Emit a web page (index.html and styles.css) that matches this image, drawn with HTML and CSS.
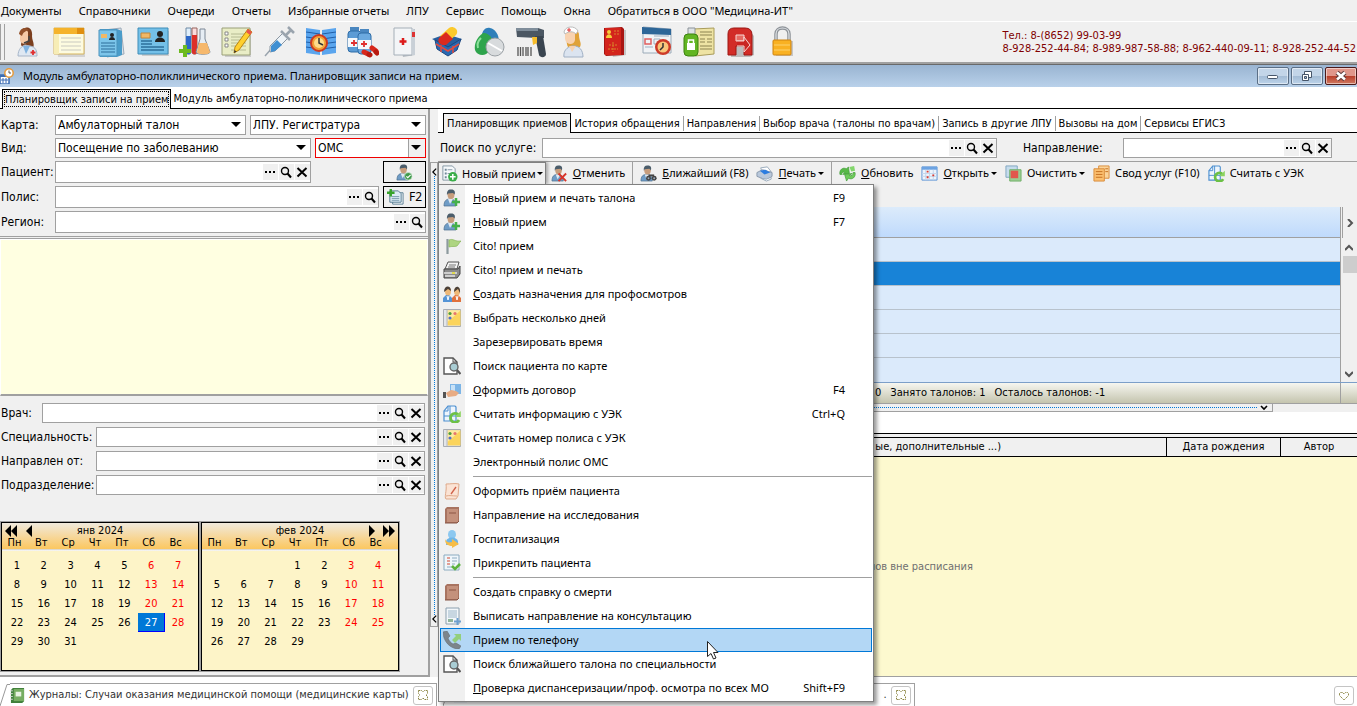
FILE: index.html
```html
<!DOCTYPE html>
<html lang="ru">
<head>
    <meta charset="UTF-8">
    <meta name="viewport" content="width=device-width, initial-scale=1.0">
    <title>Планировщик записи на прием</title>
    <link rel="stylesheet" href="styles.css">
</head>
<body>
    <!-- shared glyphs -->
    <svg class="sprite" aria-hidden="true">
        <symbol id="dots" viewBox="0 0 14 16"><path d="M2 7h2v2H2zM6 7h2v2H6zM10 7h2v2h-2z"/></symbol>
        <symbol id="search" viewBox="0 0 14 16"><circle cx="6" cy="7" r="3.500" fill="none" stroke="#000" stroke-width="1.400"/><path d="M8.500 9.500l3.500 4" stroke="#000" stroke-width="2"/></symbol>
        <symbol id="cross" viewBox="0 0 14 16"><path d="M2.500 4l9 8.500M11.500 4l-9 8.500" stroke="#000" stroke-width="2"/></symbol>
        <symbol id="person" viewBox="0 0 18 18">
            <path d="M1 17c0-5 2-7 6-7s6 2 6 7z" fill="#6f9cc6" stroke="#4a6d8c" stroke-width=".7"/>
            <path d="M5 10l2 5 3-5z" fill="#dfe9f2"/>
            <ellipse cx="8" cy="5.500" rx="3.500" ry="4.500" fill="#c79d7c"/>
            <path d="M4 6c-.5-4 1.500-6 4.500-5.500 3 0 4 2.500 3 5L10 4 5 4.500z" fill="#4b5d6b"/>
        </symbol>
        <symbol id="note" viewBox="0 0 18 18">
            <path d="M.5.5h17v17H.5z" fill="#e3e6ea" stroke="#a9adb3"/><path d="M4.500 1.500h13v15h-13z" fill="#fbd45c"/><path d="M4.500 1.500h13L4.500 13z" fill="#fdeaa0"/>
            <path d="M4 1v16" stroke="#b5b9c0"/>
            <circle cx="7" cy="4.500" r="1.600" fill="#4d9c3c"/><circle cx="12" cy="4.500" r="1.600" fill="#e8776a"/><circle cx="7" cy="9" r="1.600" fill="#5470c8"/>
        </symbol>
        <symbol id="docfind" viewBox="0 0 18 18">
            <path d="M1 1h9l4 4v12H1z" fill="#fff" stroke="#555" stroke-width="1.400"/><path d="M10 1v4h4" fill="none" stroke="#555"/>
            <circle cx="11" cy="10" r="4" fill="#a9cdd4" stroke="#666" stroke-width="1.400"/><path d="M14 13l3.500 4" stroke="#555" stroke-width="2.200"/>
        </symbol>
        <symbol id="uek" viewBox="0 0 18 18">
            <path d="M5 1h7l1 1v14H1V6z" fill="#eef5fc" stroke="#4c8fd0" stroke-width="1.200"/><path d="M5 1v5H1M7 1v15M1 11h12" fill="none" stroke="#4c8fd0"/>
            <path d="M15.500 10a4.500 4.500 0 1 0 .5 5" fill="none" stroke="#6cc046" stroke-width="2.800"/><path d="M17.800 6v6h-6z" fill="#8cd360"/>
        </symbol>
        <symbol id="book" viewBox="0 0 18 18">
            <path d="M2 3l2-2h12v14l-2 2H2z" fill="#a87360"/><path d="M4 3h11v13H4z" fill="#c4917c"/><path d="M6 6h7v2H6z" fill="#a87360"/><path d="M2 17h12l2-2" fill="none" stroke="#865444"/>
        </symbol>
        <symbol id="tab-close" viewBox="0 0 12 12"><path d="M1.500 1.500h3L6 3l1.500-1.500h3v3L9 6l1.500 1.500v3h-3L6 9l-1.500 1.500h-3v-3L3 6 1.500 4.500z" fill="#fff" stroke="#8a8440" stroke-dasharray="1.500 .7"/></symbol>
    </svg>

    <nav class="menubar">
        <a href="#">Документы</a>
        <a href="#">Справочники</a>
        <a href="#">Очереди</a>
        <a href="#">Отчеты</a>
        <a href="#">Избранные отчеты</a>
        <a href="#">ЛПУ</a>
        <a href="#">Сервис</a>
        <a href="#">Помощь</a>
        <a href="#">Окна</a>
        <a href="#">Обратиться в ООО "Медицина-ИТ"</a>
    </nav>

    <header class="toolbar">
        <div class="grip"></div>
        <div class="tools">
            <button aria-label="Оператор"><svg viewBox="0 0 32 32">
                <path d="M12 3c5-4 10 0 9 7 0 5 3 7 1 12l-9 1-3-4z" fill="#7b3f1f"/><path d="M9 9c0-5 6-7 8-3v8c-1 5-7 5-8 0z" fill="#f5c9a6"/><path d="M8 8c1-6 6-8 10-4-3 1-6 2-7 6z" fill="#93512a"/>
                <path d="M7 30c0-7 4-10 7-11l5 1c6 1 7 5 7 10z" fill="#dfe8f2" stroke="#a6b5c8"/><path d="M12 20l3 8 4-8z" fill="#7fb2e0"/><path d="M18 10v5l-5 2" fill="none" stroke="#444" stroke-width="1.500"/><path d="M22 24v5M19.500 26.500h5" stroke="#e03030" stroke-width="1.800"/>
            </svg></button>
            <button aria-label="Журнал"><svg viewBox="0 0 32 32">
                <path d="M3 5h29v26H5z" fill="#b5b5b5" opacity=".5"/><path d="M1 2h30v26H1z" fill="#fdfbe0" stroke="#d6b45c"/><path d="M1 2h30v6H1z" fill="#f5b32c"/><path d="M24 2h7v6h-7z" fill="#e08f10"/><path d="M1 8h5v20H1z" fill="#f7edb6"/>
                <path d="M8 12h20M8 16h20M8 20h20M8 24h20" stroke="#c9c9c0"/>
            </svg></button>
            <button aria-label="Карты пациентов"><svg viewBox="0 0 32 32">
                <path d="M9 4l17-2 3 26-17 3z" fill="#dce3ea" stroke="#9aa9b8"/><path d="M5 3h17l5 2v24l-5 2H5z" fill="#4a9cc9"/><path d="M4 4h18v26H4z" fill="#7cc5ea" stroke="#4b93bd"/><path d="M6 8h6v4H6z" fill="#f0b867"/><circle cx="17" cy="9" r="2" fill="#222"/><path d="M14 14c0-4 6-4 6 0z" fill="#222"/><path d="M6 17h14M6 20h14M6 23h14M6 26h14" stroke="#2c6f9a" stroke-width="1.200"/>
            </svg></button>
            <button aria-label="Карта"><svg viewBox="0 0 32 32">
                <path d="M3 5h29v25H5z" fill="#aaa" opacity=".5"/><path d="M1 2h30v26H1z" fill="#74c0e8" stroke="#3f8db8"/><path d="M4 7h9v5H4z" fill="#f0b867" stroke="#c2863a"/><circle cx="23" cy="8" r="3" fill="#222"/><path d="M18 16c0-6 10-6 10 0z" fill="#222"/><path d="M4 15h11M4 18h11M4 21h23M4 24h23" stroke="#2c6f9a" stroke-width="1.300"/>
            </svg></button>
            <button aria-label="Анализы"><svg viewBox="0 0 32 32">
                <path d="M7 2h5v24c0 3-5 3-5 0z" fill="#dfeefa" stroke="#6e8aa5"/><path d="M7 10h5v16c0 3-5 3-5 0z" fill="#2d67c8"/><path d="M13 2h5v24c0 3-5 3-5 0z" fill="#fbdcdc" stroke="#96645f"/><path d="M13 9h5v17c0 3-5 3-5 0z" fill="#dc2f28"/>
                <path d="M21 3h5v10l5 13c0 3-14 3-14 0l4-13z" fill="#e6edf4" stroke="#7c8896"/><path d="M20 17h8l3 9c0 3-13 3-13 0z" fill="#f6b86c"/><path d="M6 19v12M0 25h12" stroke="#6cba1f" stroke-width="4"/>
            </svg></button>
            <button aria-label="Запись"><svg viewBox="0 0 32 32">
                <path d="M2 3h28v28H4z" fill="#999" opacity=".4"/><path d="M1 2h28v27H1z" fill="#e9edc6" stroke="#9aa078"/><path d="M4 6h3v3H4zM4 12h3v3H4zM4 18h3v3H4z" fill="#fff" stroke="#888"/><path d="M10 8h15M10 11h15M10 14h15M10 17h15M10 20h15M10 24h15" stroke="#b5ba92"/>
                <path d="M27 3l4 3-13 18-5 3 1-6z" fill="#ffd02e" stroke="#b98512"/><path d="M27 3l4 3-2 3-4-3z" fill="#e8554a"/><path d="M13 27l.5-3 2 1.500z" fill="#333"/>
            </svg></button>
            <button aria-label="Прививки"><svg viewBox="0 0 32 32">
                <path d="M2 30l7-8" stroke="#9aa4ae" stroke-width="1.500"/><path d="M7 20L20 7l5 5-13 13-5 1z" fill="#eef3f7" stroke="#8b97a3"/><path d="M8 20l6-6 5 5-7 6-4 1z" fill="#3f8fd2"/><path d="M18 5l9 9M23 9l5-5M25 1l6 6" stroke="#9aa4ae" stroke-width="2.500"/>
            </svg></button>
            <button aria-label="Расписание"><svg viewBox="0 0 32 32">
                <path d="M1 2l14 2v25L1 27zM31 2L17 4v25l14-2z" fill="#5aa5ee"/><path d="M1 6l14 2M1 11l14 2M1 16l14 2M1 21l14 2M31 6L17 8M31 11l-14 2M31 16l-14 2M31 21l-14 2" stroke="#225fa8"/><circle cx="14" cy="17" r="8" fill="#f3a336" stroke="#cc3a22" stroke-width="2"/><circle cx="14" cy="17" r="5" fill="#ffdc8a"/><path d="M14 12v5l4 2" fill="none" stroke="#333" stroke-width="1.500"/>
            </svg></button>
            <button aria-label="Лекарства"><svg viewBox="0 0 32 32">
                <path d="M3 1h9v4H3z" fill="#4a87c0"/><rect x="1" y="5" width="13" height="21" rx="3" fill="#5b9bd5" stroke="#2f6ca6"/><path d="M1 12h13v9H1z" fill="#f4f8fb"/><path d="M7 14v6M4 17h6" stroke="#e03030" stroke-width="1.800"/>
                <path d="M13 3h9v4h-9z" fill="#4a87c0"/><rect x="11" y="7" width="13" height="21" rx="3" fill="#6ba9df" stroke="#2f6ca6"/><path d="M11 14h13v9H11z" fill="#f4f8fb"/><path d="M17 15v6M14 18h6" stroke="#e03030" stroke-width="1.800"/>
                <path d="M17 26l4 2M25 22l4 3" stroke="#d8281c" stroke-width="5" stroke-linecap="round"/><path d="M22 28.500l1 .5M29 26l1 1" stroke="#b81a10" stroke-width="5" stroke-linecap="round"/>
            </svg></button>
            <button aria-label="Медкарта"><svg viewBox="0 0 32 32">
                <path d="M9 4l17-1v26l-12 2z" fill="#8c98a4" opacity=".6"/><path d="M5 2h18v27H5z" fill="#f3f5f7" stroke="#a5afb8"/><path d="M23 2l3 2v25l-3 0z" fill="#c9d0d7"/><path d="M23 6h3v5h-3z" fill="#d33"/><path d="M14 12v7M10.500 15.500h7" stroke="#dc1c1c" stroke-width="2.500"/>
            </svg></button>
            <button aria-label="Корзина лекарств"><svg viewBox="0 0 32 32">
                <path d="M1 13l14-5 16 5-13 9z" fill="#275f9e"/><path d="M4 14l2 9 11 7 9-6 4-11-13 8z" fill="#2a69b2" stroke="#1b4680"/><path d="M9 10L18 2c4-3 11 2 7 7l-8 7z" fill="#fbc92b"/><path d="M8 12l7-6 7 7-7 6c-6 1-9-3-7-7z" fill="#db2a1e"/><path d="M5 18l12 7 11-7M10 19v7M22 20v7" fill="none" stroke="#e24a3e" stroke-width="1.500"/>
            </svg></button>
            <button aria-label="Препараты"><svg viewBox="0 0 32 32">
                <path d="M9 10C9 4 13 1 17 2c5 1 9 6 9 14l-8 4z" fill="#2f7fb9"/><path d="M10 7c-7 5-9 12-8 17 2 6 11 7 14 1l4-8c0-5-5-11-10-10z" fill="#2ea44c"/><path d="M8 12c-3 3-4 7-3 10" stroke="#8be09a" stroke-width="2" fill="none"/><ellipse cx="22" cy="21" rx="9" ry="9" fill="#d8dbdd" stroke="#9aa0a5"/><path d="M15 17l14 8" stroke="#fff" stroke-width="2"/>
            </svg></button>
            <button aria-label="Сканер штрихкода"><svg viewBox="0 0 32 32">
                <path d="M1 2h22l6 2v8h-7L2 11z" fill="#4b5763"/><path d="M1 2h22v3H1z" fill="#7f8d9a"/><path d="M20 10h8l3 18c0 4-6 4-7 1z" fill="#3a4550"/><path d="M17 11h5v6l-4 2z" fill="#f6bc2a"/><path d="M3 21v9M5.500 21v9M8 21v9M11 21v9M13 21v9M16 21v9" stroke="#555" stroke-width="1.300"/>
            </svg></button>
            <button aria-label="Медсестра"><svg viewBox="0 0 32 32">
                <path d="M10 8c0-6 12-6 12 1 0 6 3 8 1 12H11c-2-4-1-8-1-13z" fill="#e0a238"/><path d="M8 8c0-3 8-4 10-1v7c-1 6-9 5-10-1z" fill="#f8d2b0"/><path d="M7 6c1-6 11-7 14-1l-2 3C16 5 12 5 8 8z" fill="#fff" stroke="#bbb"/><path d="M12 2v4M10 4h4" stroke="#e03030"/>
                <path d="M7 31c-1-6 3-10 8-11 8-1 11 5 11 11z" fill="#dbe4f0" stroke="#a0b0c4"/><path d="M12 20l3 6 4-6z" fill="#f8d2b0"/>
            </svg></button>
            <button aria-label="Справочник"><svg viewBox="0 0 32 32">
                <path d="M8 4h19v25l-13 2z" fill="#999" opacity=".5"/><path d="M5 2l18-1 2 2v26l-18 1-2-2z" fill="#a81512"/><path d="M6 2h16v27H6z" fill="#d3241c"/><circle cx="10" cy="6" r="2" fill="#f6cd3a"/><path d="M7 12c0-5 6-5 6 0z" fill="#f6cd3a"/><path d="M15 5h5M15 8h5M14 16v10M10 19h8M9 23h10" stroke="#d9862a" stroke-dasharray="2 1"/>
            </svg></button>
            <button aria-label="Расписание врачей"><svg viewBox="0 0 32 32">
                <path d="M2 1l28 2v24L2 27z" fill="#f0f3f6" stroke="#9baab8"/><path d="M1 1l29 2v6L1 8z" fill="#2d6698"/><path d="M4 13h6v5H4z" fill="none" stroke="#e06060" stroke-width="1.500"/><path d="M13 13h6v5h-6zM4 21h8M13 10h15" fill="none" stroke="#9eb0c2"/><circle cx="22" cy="21" r="8" fill="#cd3a28"/><circle cx="22" cy="21" r="5.500" fill="#f9c67b"/><path d="M22 17v4l-3 3" fill="none" stroke="#333" stroke-width="1.500"/>
            </svg></button>
            <button aria-label="Доступ"><svg viewBox="0 0 32 32">
                <path d="M10 3l21-1v26l-19 2z" fill="#eee3a4" stroke="#a99c5b"/><path d="M17 6h12M17 9h12M17 13h5M24 13h5M17 16h5M24 16h5M17 20h12M17 23h12" stroke="#8c8350"/><path d="M5 2h7v9H5z" fill="#dde2e6" stroke="#8b9299"/><rect x="1" y="8" width="14" height="22" rx="4" fill="#62b522" stroke="#3c8310"/><path d="M4 17h8v7H4z" fill="#fff"/><path d="M5.500 17v-3h5v3" fill="none" stroke="#fff" stroke-width="1.500"/>
            </svg></button>
            <button aria-label="Выход"><svg viewBox="0 0 32 32">
                <path d="M6 31V10l7-7h10l6 7v19l-4 2z" fill="#999" opacity=".6"/><path d="M3 29V8q0-6 6-6h11q7 0 7 7v20h-8v-9h-8v9z" fill="#d22c27" stroke="#9c1613"/><path d="M11 9h8v6h-8z" fill="#e66a62" stroke="#f7d6d2"/><path d="M12 15h7v-4l6 8-6 7v-6h-7" fill="#c92522" stroke="#f7d6d2"/>
            </svg></button>
            <button aria-label="Блокировка"><svg viewBox="0 0 32 32">
                <path d="M9 15V8c0-8 13-8 13 0v7" fill="none" stroke="#8d9298" stroke-width="3.500"/><path d="M9 15V8c0-8 13-8 13 0v7" fill="none" stroke="#dfe3e6" stroke-width="1.200"/><path d="M7 15h19v15H9z" fill="#aaa" opacity=".6"/><rect x="6" y="14" width="18" height="15" rx="1" fill="#f9b122" stroke="#cf8410"/><path d="M7 19h16M7 24h16" stroke="#fdd36f"/>
            </svg></button>
        </div>
        <p class="phones">Тел.: 8-(8652) 99-03-99<br>8-928-252-44-84; 8-989-987-58-88; 8-962-440-09-11; 8-928-252-44-52</p>
    </header>

    <div class="titlebar">
        <svg class="title-icon" viewBox="0 0 14 16"><path d="M0 7h9v9H0z" fill="#fff" stroke="#3c6db4" stroke-width="1.500"/><path d="M0 7h9v2H0z" fill="#3c6db4"/><path d="M1 12h7M3 10v5M6 10v5" stroke="#3c6db4"/><circle cx="9" cy="5" r="4.200" fill="#fff" stroke="#e69a3b" stroke-width="1.500"/><path d="M9 2.500V5h2" fill="none" stroke="#555"/></svg>
        <h1>Модуль амбулаторно-поликлинического приема. Планировщик записи на прием.</h1>
        <div class="window-buttons">
            <button aria-label="Свернуть"><svg viewBox="0 0 14 14"><rect x="1.500" y="6.500" width="10" height="3" rx="1" fill="#fff" stroke="#47566a"/></svg></button>
            <button aria-label="Восстановить"><svg viewBox="0 0 14 14"><path d="M4.500 2.500h7v6h-7z" fill="#fff" stroke="#47566a"/><path d="M2.500 5.500h6v6h-6z" fill="#fff" stroke="#47566a"/><path d="M4.500 7.500h2v2h-2z" fill="#a3bbd4" stroke="#47566a"/></svg></button>
            <button class="close" aria-label="Закрыть"><svg viewBox="0 0 14 14"><path d="M3 3.500l8 7M11 3.500l-8 7" stroke="#5c3a3a" stroke-width="4.500"/><path d="M3 3.500l8 7M11 3.500l-8 7" stroke="#fff" stroke-width="2.600"/></svg></button>
        </div>
    </div>

    <nav class="page-tabs">
        <a href="#" class="active">Планировщик записи на прием</a>
        <a href="#">Модуль амбулаторно-поликлинического приема</a>
    </nav>

    <main>
        <aside>
            <form class="patient-form">
                <label for="card">Карта:</label>
                <div class="line">
                    <span class="select grow-13"><select id="card"><option>Амбулаторный талон</option></select></span>
                    <span class="select grow-12"><select aria-label="Подразделение ЛПУ"><option>ЛПУ. Регистратура</option></select></span>
                </div>

                <label for="kind">Вид:</label>
                <div class="line">
                    <span class="select wide"><select id="kind"><option>Посещение по заболеванию</option></select></span>
                    <span class="select side required"><select aria-label="Вид оплаты"><option>ОМС</option></select></span>
                </div>

                <label for="patient">Пациент:</label>
                <div class="line">
                    <span class="field wide"><input id="patient" type="text"><button type="button" aria-label="Выбрать"><svg><use href="#dots"/></svg></button><button type="button" aria-label="Найти"><svg><use href="#search"/></svg></button><button type="button" aria-label="Очистить"><svg><use href="#cross"/></svg></button></span>
                    <button type="button" class="action" aria-label="Проверить пациента"><svg viewBox="0 0 18 18"><use href="#person"/><circle cx="13" cy="13" r="4" fill="#3f9a4c" stroke="#d8ecd8" stroke-width=".7"/><path d="M11 13l1.500 1.500 3-3" fill="none" stroke="#fff" stroke-width="1.200"/></svg></button>
                </div>

                <label for="policy">Полис:</label>
                <div class="line">
                    <span class="field"><input id="policy" type="text"><button type="button" aria-label="Выбрать"><svg><use href="#dots"/></svg></button><button type="button" aria-label="Найти"><svg><use href="#search"/></svg></button></span>
                    <button type="button" class="action"><svg viewBox="0 0 18 18"><path d="M6 4h11v12H6z" fill="#fff" stroke="#557b92"/><path d="M3 2h9l3 3v9H3z" fill="#dcebf5" stroke="#557b92"/><path d="M5 8h8M5 10h8M5 12h8" stroke="#7b9cb0"/><path d="M4 0v8M0 4h8" stroke="#37a32c" stroke-width="2.500"/></svg>F2</button>
                </div>

                <label for="region">Регион:</label>
                <div class="line">
                    <span class="field"><input id="region" type="text"><button type="button" aria-label="Выбрать"><svg><use href="#dots"/></svg></button><button type="button" aria-label="Найти"><svg><use href="#search"/></svg></button></span>
                </div>
            </form>

            <textarea class="memo" aria-label="Сведения о пациенте" readonly></textarea>

            <form class="doctor-form">
                <div class="line"><label for="doctor" class="short">Врач:</label><span class="field"><input id="doctor" type="text"><button type="button" aria-label="Выбрать"><svg><use href="#dots"/></svg></button><button type="button" aria-label="Найти"><svg><use href="#search"/></svg></button><button type="button" aria-label="Очистить"><svg><use href="#cross"/></svg></button></span></div>
                <div class="line"><label for="spec">Специальность:</label><span class="field"><input id="spec" type="text"><button type="button" aria-label="Выбрать"><svg><use href="#dots"/></svg></button><button type="button" aria-label="Найти"><svg><use href="#search"/></svg></button><button type="button" aria-label="Очистить"><svg><use href="#cross"/></svg></button></span></div>
                <div class="line"><label for="from">Направлен от:</label><span class="field"><input id="from" type="text"><button type="button" aria-label="Выбрать"><svg><use href="#dots"/></svg></button><button type="button" aria-label="Найти"><svg><use href="#search"/></svg></button><button type="button" aria-label="Очистить"><svg><use href="#cross"/></svg></button></span></div>
                <div class="line"><label for="dept">Подразделение:</label><span class="field"><input id="dept" type="text"><button type="button" aria-label="Выбрать"><svg><use href="#dots"/></svg></button><button type="button" aria-label="Найти"><svg><use href="#search"/></svg></button><button type="button" aria-label="Очистить"><svg><use href="#cross"/></svg></button></span></div>
            </form>

            <div class="calendars">
                <section class="calendar">
                    <div class="month">
                        <div class="nav"><button aria-label="Предыдущий год"><svg viewBox="0 0 12 12"><path d="M6 0v12L0 6zM12 0v12L6 6z"/></svg></button><button aria-label="Предыдущий месяц"><svg viewBox="0 0 12 12"><path d="M10 0v12L4 6z"/></svg></button></div>
                        <span>янв 2024</span>
                        <div class="nav"></div>
                    </div>
                    <table>
                        <thead><tr><th>Пн</th><th>Вт</th><th>Ср</th><th>Чт</th><th>Пт</th><th>Сб</th><th>Вс</th></tr></thead>
                        <tbody>
                            <tr><td>1</td><td>2</td><td>3</td><td>4</td><td>5</td><td>6</td><td>7</td></tr>
                            <tr><td>8</td><td>9</td><td>10</td><td>11</td><td>12</td><td>13</td><td>14</td></tr>
                            <tr><td>15</td><td>16</td><td>17</td><td>18</td><td>19</td><td>20</td><td>21</td></tr>
                            <tr><td>22</td><td>23</td><td>24</td><td>25</td><td>26</td><td class="today">27</td><td>28</td></tr>
                            <tr><td>29</td><td>30</td><td>31</td><td></td><td></td><td></td><td></td></tr>
                        </tbody>
                    </table>
                </section>
                <section class="calendar">
                    <div class="month">
                        <div class="nav"></div>
                        <span>фев 2024</span>
                        <div class="nav"><button aria-label="Следующий месяц"><svg viewBox="0 0 12 12"><path d="M3 0v12l6-6z"/></svg></button><button aria-label="Следующий год"><svg viewBox="0 0 12 12"><path d="M0 0v12l6-6zM6 0v12l6-6z"/></svg></button></div>
                    </div>
                    <table>
                        <thead><tr><th>Пн</th><th>Вт</th><th>Ср</th><th>Чт</th><th>Пт</th><th>Сб</th><th>Вс</th></tr></thead>
                        <tbody>
                            <tr><td></td><td></td><td></td><td>1</td><td>2</td><td>3</td><td>4</td></tr>
                            <tr><td>5</td><td>6</td><td>7</td><td>8</td><td>9</td><td>10</td><td>11</td></tr>
                            <tr><td>12</td><td>13</td><td>14</td><td>15</td><td>16</td><td>17</td><td>18</td></tr>
                            <tr><td>19</td><td>20</td><td>21</td><td>22</td><td>23</td><td>24</td><td>25</td></tr>
                            <tr><td>26</td><td>27</td><td>28</td><td>29</td><td></td><td></td><td></td></tr>
                        </tbody>
                    </table>
                </section>
            </div>
        </aside>

        <div class="splitter">
            <svg viewBox="0 0 6 8"><path d="M5 0L1 4l4 4" fill="none" stroke="#000" stroke-width="1.500"/></svg>
            <i></i>
            <svg viewBox="0 0 6 8"><path d="M5 0L1 4l4 4" fill="none" stroke="#000" stroke-width="1.500"/></svg>
        </div>

        <section class="planner">
            <nav class="planner-tabs">
                <a href="#" class="active">Планировщик приемов</a>
                <a href="#">История обращения</a>
                <a href="#">Направления</a>
                <a href="#">Выбор врача (талоны по врачам)</a>
                <a href="#">Запись в другие ЛПУ</a>
                <a href="#">Вызовы на дом</a>
                <a href="#">Сервисы ЕГИСЗ</a>
            </nav>

            <form class="search-row">
                <label for="service">Поиск по услуге:</label>
                <span class="field"><input id="service" type="text"><button type="button" aria-label="Выбрать"><svg><use href="#dots"/></svg></button><button type="button" aria-label="Найти"><svg><use href="#search"/></svg></button><button type="button" aria-label="Очистить"><svg><use href="#cross"/></svg></button></span>
                <label for="referral" class="referral">Направление:</label>
                <span class="field small"><input id="referral" type="text"><button type="button" aria-label="Выбрать"><svg><use href="#dots"/></svg></button><button type="button" aria-label="Найти"><svg><use href="#search"/></svg></button><button type="button" aria-label="Очистить"><svg><use href="#cross"/></svg></button></span>
            </form>

            <div class="actions">
                <div class="dropdown">
                    <button class="open"><svg viewBox="0 0 18 18"><path d="M2 1h10l3 3v12H2z" fill="#f5f8fa" stroke="#8496a3"/><path d="M4 4h2v2H4zM4 8h2v2H4zM4 12h2v2H4z" fill="#6f8797"/><path d="M7 5h5M7 9h3" stroke="#8496a3"/><circle cx="12.500" cy="12.500" r="5" fill="#3aad48"/><path d="M12.500 9.500v6M9.500 12.500h6" stroke="#fff" stroke-width="1.600"/></svg><span>Новый прием</span><b class="caret"></b></button>
                    <ul class="menu">
                        <li><a href="#"><svg viewBox="0 0 18 18"><use href="#person"/><path d="M13 9v8M9 13h8" stroke="#45b04a" stroke-width="2.500"/></svg><span><u>Н</u>овый прием и печать талона</span><kbd>F9</kbd></a></li>
                        <li><a href="#"><svg viewBox="0 0 18 18"><use href="#person"/><path d="M13 9v8M9 13h8" stroke="#45b04a" stroke-width="2.500"/></svg><span><u>Н</u>овый прием</span><kbd>F7</kbd></a></li>
                        <li><a href="#"><svg viewBox="0 0 18 18"><path d="M4.500 2v15" stroke="#8d9a9e" stroke-width="2.200"/><path d="M6 3c4-2 6 2 12 1-2 2-3 4-4 5-3 1-5 0-8 1z" fill="#aed581" stroke="#87b457" stroke-width=".7"/></svg><span>Cito! прием</span></a></li>
                        <li><a href="#"><svg viewBox="0 0 18 18"><path d="M5 1h11l-2 7H2z" fill="#f4f4f4" stroke="#555"/><path d="M6 4h7M5 6h7" stroke="#777"/><path d="M1 8h14l2-3v8l-3 4H1z" fill="#8b8b8b" stroke="#444"/><path d="M1 12h13M2 15h10" stroke="#e3e3e3" stroke-width="1.400"/><path d="M9 12h3" stroke="#e5dd30" stroke-width="1.600"/></svg><span>Cito! прием и печать</span></a></li>
                        <li><a href="#"><svg viewBox="0 0 18 18"><path d="M0 17v-4l3-3h3l3 3v4z" fill="#5594d6"/><path d="M9 17v-4l3-3h3l3 3v4z" fill="#e0713c"/><ellipse cx="5" cy="6.500" rx="3" ry="4" fill="#eeb878"/><ellipse cx="14" cy="6.500" rx="3" ry="4" fill="#eeb878"/><path d="M1 7c0-7 7-7 7-1L5 4zM11 7c0-7 7-7 6 1l-2-4z" fill="#4b4038"/><path d="M4 11l1 4 1-4M13 11l1 4 1-4" stroke="#fff" fill="none"/></svg><span><u>С</u>оздать назначения для профосмотров</span></a></li>
                        <li><a href="#"><svg><use href="#note"/></svg><span>Выбрать несколько дней</span></a></li>
                        <li><a href="#"><i></i><span>Зарезервировать время</span></a></li>
                        <li><a href="#"><svg><use href="#docfind"/></svg><span>Поиск пациента по карте</span></a></li>
                        <li><a href="#"><svg viewBox="0 0 18 18"><path d="M7 3h11v10H7z" fill="#7db5e6"/><path d="M8 4h4v8H8z" fill="#c8e1f6"/><path d="M3 12l5-3 5 1 3 2-3 3-8 1z" fill="#e8ac84"/><path d="M0 11h3v6H0z" fill="#555"/></svg><span><u>О</u>формить договор</span><kbd>F4</kbd></a></li>
                        <li><a href="#"><svg><use href="#uek"/></svg><span>Считать информацию с УЭК</span><kbd>Ctrl+Q</kbd></a></li>
                        <li><a href="#"><svg><use href="#note"/></svg><span>Считать номер полиса с УЭК</span></a></li>
                        <li><a href="#"><i></i><span>Электронный полис ОМС</span></a></li>
                        <li class="separator"></li>
                        <li><a href="#"><svg viewBox="0 0 18 18"><path d="M3 2c5 0 9-1 13 0l-1 12-2 3H3c-2-2 1-8 0-15z" fill="#fbe3d4" stroke="#dfa98a"/><path d="M13 5l-5 7" stroke="#d0624a" stroke-width="1.300"/><path d="M3 14c4-1 6 0 11 0" stroke="#dfa98a" fill="none"/></svg><span>Оформить приём пациента</span></a></li>
                        <li><a href="#"><svg><use href="#book"/></svg><span>Направление на исследования</span></a></li>
                        <li><a href="#"><svg viewBox="0 0 18 18"><ellipse cx="9" cy="4.500" rx="4" ry="4.500" fill="#8cc8f0"/><path d="M3 12c0-6 12-6 12 0v3H3z" fill="#70b5e6"/><path d="M2 9c1 3 4 4 7 3V9l7 5-7 4v-2C5 16 2 14 2 9z" fill="#f7bd46"/></svg><span>Госпитализация</span></a></li>
                        <li><a href="#"><svg viewBox="0 0 18 18"><path d="M1 1h15v15H1z" fill="#eff6fb" stroke="#8cabc0"/><path d="M4 4h3M4 7h3M4 10h3" stroke="#dd8374" stroke-width="1.500"/><path d="M9 4h5M9 7h5M9 10h3M4 13h5" stroke="#8cabc0"/><path d="M9 12l3 3 5-5" fill="none" stroke="#5cb23f" stroke-width="2.600"/></svg><span>Прикрепить пациента</span></a></li>
                        <li class="separator"></li>
                        <li><a href="#"><svg><use href="#book"/></svg><span>Создать справку о смерти</span></a></li>
                        <li><a href="#"><svg viewBox="0 0 18 18"><path d="M3 1h13v16H3z" fill="#f3f7fa" stroke="#8ca0af"/><path d="M5 4h9M5 6h9M5 8h9M5 10h9" stroke="#9cb6c8"/><path d="M5 12h5v3H5z" fill="#8fb39a"/><path d="M14.500 11v7M11 14.500h7" stroke="#6e9fce" stroke-width="2"/></svg><span>Выписать направление на консультацию</span></a></li>
                        <li><a href="#" class="hover"><svg viewBox="0 0 18 18"><path d="M0 1l4-1 3 5-2 2c1 3 3 5 5 6l3-1 5 3-2 3c-9 0-16-8-16-17z" fill="#7d858c" stroke="#666d73" stroke-width=".6"/><path d="M9 9l4-4-2-2h7v7l-2-2-4 4z" fill="#93cf7c"/></svg><span>Прием по телефону</span></a></li>
                        <li><a href="#"><svg><use href="#docfind"/></svg><span>Поиск ближайшего талона по специальности</span></a></li>
                        <li><a href="#"><i></i><span><u>П</u>роверка диспансеризации/проф. осмотра по всех МО</span><kbd>Shift+F9</kbd></a></li>
                    </ul>
                    <svg class="cursor" viewBox="0 0 12 19"><path d="M.5.5v15l3.500-3 2.500 5.500 2.500-1-2.500-5.500H11z" fill="#fff" stroke="#222"/></svg>
                </div>
                <button><svg viewBox="0 0 18 18"><use href="#person"/><path d="M8 9l8 8M16 9l-8 8" stroke="#d8352a" stroke-width="2"/></svg><span><u>О</u>тменить</span></button>
                <hr>
                <button><svg viewBox="0 0 18 18"><use href="#person"/><circle cx="9" cy="14" r="2.600" fill="#444"/><circle cx="15" cy="14" r="2.600" fill="#444"/><path d="M9 11h6" stroke="#444" stroke-width="2"/><circle cx="9" cy="14" r="1" fill="#9ab"/><circle cx="15" cy="14" r="1" fill="#9ab"/></svg><span><u>Б</u>лижайший (F8)</span></button>
                <button><svg viewBox="0 0 18 18"><path d="M5 3l7-1 4 5-9 2z" fill="#fff" stroke="#9ab"/><path d="M1 8l6-3 10 3v4l-6 4L1 12z" fill="#b9c8db" stroke="#8898ab"/><path d="M4 6l6-1 5 3-6 2z" fill="#2c7de0"/><path d="M5 14l6 1 5-2v2l-5 2z" fill="#fff" stroke="#9ab"/></svg><span><u>П</u>ечать</span><b class="caret"></b></button>
                <hr>
                <button><svg viewBox="0 0 18 18"><path d="M1 10c-1-5 3-8 7-6l2-2 1 7-7 1 2-2c-2-1-3 0-3 2z" fill="#58b948" stroke="#3d9a33" stroke-width=".7"/><path d="M17 8c1 5-3 8-7 6l-2 3-2-7 8-1-3 2c2 1 4 0 4-3z" fill="#6fcb5b" stroke="#3d9a33" stroke-width=".7"/><path d="M11 2l5-1 1 5-4 1z" fill="#83d66c"/></svg><span><u>О</u>бновить</span></button>
                <button><svg viewBox="0 0 18 18"><path d="M1 2h16v14H1z" fill="#eef4fb" stroke="#5a93d6"/><path d="M1 2h16v3H1z" fill="#6ca3e2"/><path d="M5 5v11M9 5v11M13 5v11M1 9h16M1 12h16" stroke="#c2d6ec"/><path d="M6 6h2v2H6zM6 12h2v2H6zM12 10h2v2h-2z" fill="#db3b30"/></svg><span><u>О</u>ткрыть</span><b class="caret"></b></button>
                <button><svg viewBox="0 0 18 18"><path d="M1 1h12v12H1z" fill="#c6dcec" stroke="#7fa6bf"/><path d="M5 5h12v12H5z" fill="#9bcd92" stroke="#6fae68"/><path d="M6 6h8v8H6z" fill="#e2574d"/></svg><span>Очистить</span><b class="caret"></b></button>
                <button><svg viewBox="0 0 18 18"><path d="M6 1h11v13H6z" fill="#fbd49a" stroke="#d98c3c"/><path d="M1 4h11v13H1z" fill="#fbbf6f" stroke="#d98c3c"/><path d="M3 7h7M3 10h7M3 13h7M13 4h3M13 7h3" stroke="#c46f1f"/></svg><span>Свод услуг (F10)</span></button>
                <button><svg><use href="#uek"/></svg><span>Считать с УЭК</span></button>
            </div>

            <div class="schedule">
                <div class="slots">
                    <div class="slots-head"></div>
                    <div class="slot"></div>
                    <div class="slot selected"></div>
                    <div class="slot"></div>
                    <div class="slot"></div>
                    <div class="slot"></div>
                    <div class="slot"></div>
                </div>
                <div class="scroll">
                    <div class="expand"><svg viewBox="0 0 8 8"><path d="M2 0l4 4-4 4" fill="none" stroke="#555" stroke-width="2"/></svg></div>
                    <svg viewBox="0 0 8 8"><path d="M0 6l4-4 4 4" fill="none" stroke="#555" stroke-width="2"/></svg>
                    <div class="thumb"></div>
                    <svg viewBox="0 0 8 8"><path d="M0 2l4 4 4-4" fill="none" stroke="#555" stroke-width="2"/></svg>
                </div>
            </div>

            <div class="status">
                <p><span>0</span><span>Занято талонов: 1</span><span>Осталось талонов: -1</span></p>
            </div>

            <div class="h-splitter"><div><i></i><svg viewBox="0 0 8 6"><path d="M1 1l3 3 3-3" fill="none" stroke="#000" stroke-width="1.600"/></svg></div></div>
            <div class="blank"></div>

            <table class="extra">
                <thead>
                    <tr><th class="info">ые, дополнительные ...)</th><th class="birth">Дата рождения</th><th class="author">Автор</th></tr>
                </thead>
                <tbody>
                    <tr><td colspan="3">Нет талонов вне расписания</td></tr>
                </tbody>
            </table>
        </section>
    </main>

    <footer>
        <div class="doc-tab">
            <svg class="slant" viewBox="0 0 10 23"><path d="M0 23L7 1.500h3" fill="none" stroke="#999"/></svg>
            <div class="doc-body"><svg viewBox="0 0 16 16"><path d="M1 2l2-2h12v14l-2 2H1z" fill="#3f7f3a"/><path d="M4 1h11v13H4z" fill="#76ad62"/><path d="M6 4h6v5H6z" fill="#e8f2e2"/><path d="M0 3h3M0 6h3M0 9h3M0 12h3" stroke="#ddd"/></svg><span>Журналы: Случаи оказания медицинской помощи (медицинские карты)</span><button aria-label="Закрыть вкладку"><svg><use href="#tab-close"/></svg></button></div>
        </div>
        <div class="doc-tab current">
            <svg class="slant" viewBox="0 0 10 23"><path d="M0 23L7 1.500h3" fill="none" stroke="#999"/></svg>
            <div class="doc-body"><svg viewBox="0 0 16 16"><path d="M1 2h14v13H1z" fill="#2f62ad"/></svg><span>.</span><button aria-label="Закрыть вкладку"><svg><use href="#tab-close"/></svg></button></div>
        </div>
        <button class="more" aria-label="Список вкладок"><svg viewBox="0 0 12 12"><path d="M1.500 3.500l1-1h2L6 4l1.500-1.500h2l1 1v2L6 10 1.500 5.500z" fill="#fff" stroke="#8a8440" stroke-dasharray="1.500 .7"/></svg></button>
    </footer>
</body>
</html>
```
FILE: styles.css
```css
* {
    box-sizing: border-box;
}

body {
    margin: 0;
    height: 100vh;
    display: flex;
    flex-direction: column;
    overflow: hidden;
    background: #f0f0f0;
    color: #000;
    font-family: 'Noto Sans', 'Open Sans', sans-serif;
    font-size: 11px;
    line-height: 16px;
}

a {
    color: inherit;
    text-decoration: none;
}

button,
input,
select,
textarea {
    font: inherit;
    color: inherit;
    margin: 0;
    padding: 0;
    border: 0;
    background: none;
    outline: none;
}

p,
h1 {
    margin: 0;
    font-size: inherit;
    font-weight: normal;
}

.sprite {
    display: none;
}

/* main menu */
.menubar {
    display: flex;
    gap: 17px;
    height: 22px;
    padding: 3px 1px 0;
    border-bottom: 1px solid #fff;
}

/* big icons */
.toolbar {
    display: flex;
    align-items: center;
    height: 42px;
    border-bottom: 2px solid #a0a0a0;
}

.grip {
    width: 5px;
    height: 36px;
    border: solid #a0a0a0;
    border-width: 0 1px;
}

.tools {
    display: flex;
    gap: 10px;
    margin-left: 6px;
}

.tools button,
.tools svg {
    display: block;
    width: 32px;
    height: 32px;
}

.phones {
    margin-left: auto;
    padding-right: 1px;
    color: #800000;
    font-family: 'DejaVu Sans Condensed', 'DejaVu Sans', sans-serif;
    line-height: 13px;
    white-space: nowrap;
}

/* window title */
.titlebar {
    display: flex;
    align-items: center;
    height: 23px;
    border-top: 1px solid #696969;
    background: linear-gradient(#99b4d1, #b9d1ea);
}

.title-icon {
    width: 14px;
    height: 16px;
    margin-right: 9px;
}

.window-buttons {
    display: flex;
    gap: 2px;
    margin-left: auto;
}

.window-buttons button {
    display: flex;
    align-items: center;
    justify-content: center;
    width: 32px;
    height: 18px;
    border: 1px solid #5b6f86;
    border-radius: 2px;
    background: linear-gradient(#c3d5e8 50%, #a3bbd4 50%, #bcd3ea);
    box-shadow: inset 0 0 0 1px rgba(255, 255, 255, 0.5);
}

.window-buttons svg {
    width: 14px;
    height: 14px;
}

.window-buttons .close {
    border-color: #4c1a1a;
    background: linear-gradient(#e0968a 50%, #b83c28 50%, #d07a62);
}

/* tabs over the whole page */
.page-tabs {
    display: flex;
    align-items: flex-end;
    gap: 2px;
    height: 22px;
    padding-left: 2px;
    background: #fff;
    border-bottom: 1px solid #000;
    font-family: 'DejaVu Sans Condensed', 'DejaVu Sans', sans-serif;
}

.page-tabs a {
    height: 18px;
    line-height: 18px;
}

.page-tabs .active {
    height: 20px;
    margin-bottom: -1px;
    padding: 0 2px;
    border: 1px solid #000;
    border-bottom: 0;
    background: #f0f0f0;
    outline: 1px dotted #000;
    outline-offset: -3px;
    line-height: 20px;
}

main {
    flex: 1;
    min-height: 0;
    display: flex;
}

/* left panel */
aside {
    flex: 0 0 430px;
    display: flex;
    flex-direction: column;
    border: solid #a0a0a0;
    border-width: 0 2px 2px 0;
    font-family: 'DejaVu Sans Condensed', 'DejaVu Sans', sans-serif;
    font-size: 12px;
}

.patient-form {
    display: grid;
    grid-template-columns: 55px 1fr;
    row-gap: 3px;
    align-items: center;
    padding: 6px 2px 3px 0;
    border-bottom: 3px double #a0a0a0;
}

.patient-form label {
    padding-left: 1px;
}

.line {
    display: flex;
    gap: 4px;
    align-items: center;
    min-width: 0;
}

.field {
    flex: 1;
    min-width: 0;
    display: flex;
    align-items: center;
    gap: 1px;
    height: 20px;
    background: #fff;
    border: 1px solid #a0a0a0;
}

.patient-form .field {
    height: 22px;
}

.field input {
    flex: 1;
    width: 0;
    height: 100%;
    padding: 0 3px;
}

.field button {
    width: 15px;
    height: 16px;
    background: #f0f0f0;
}

.field svg {
    display: block;
    width: 14px;
    height: 16px;
}

.select {
    position: relative;
    display: block;
    height: 20px;
    min-width: 0;
    background: #fff;
    border: 1px solid #a0a0a0;
}

.select select {
    appearance: none;
    width: 100%;
    height: 18px;
    padding: 0 20px 0 2px;
}

.select::after {
    content: '';
    position: absolute;
    right: 4px;
    top: 6px;
    border: 5px solid transparent;
    border-top-color: #000;
    border-bottom: 0;
    pointer-events: none;
}

.grow-13 {
    flex: 13;
}

.grow-12 {
    flex: 12;
}

.wide,
.field.wide {
    flex: 0 0 256px;
}

.side {
    flex: 1;
}

.required {
    border-color: #f00000;
}

.required select {
    background: linear-gradient(90deg, #a0a0a0 1px, #f0f0f0 1px) right / 17px 100% no-repeat;
}

.action {
    display: flex;
    align-items: center;
    justify-content: center;
    gap: 5px;
    width: 43px;
    height: 22px;
    margin-left: auto;
    border: 1px solid #000;
    font-family: 'Noto Sans', sans-serif;
}

.action svg {
    width: 17px;
    height: 17px;
}

.memo {
    height: 157px;
    resize: none;
    background: #ffffe1;
    border: 1px solid #fff;
    border-bottom: 2px solid #a0a0a0;
}

.doctor-form {
    display: flex;
    flex-direction: column;
    gap: 4px;
    padding: 7px 3px 0 0;
}

.doctor-form label {
    width: 93px;
    padding-left: 1px;
    white-space: nowrap;
}

.doctor-form .short {
    width: 39px;
}

.doctor-form .line {
    gap: 3px;
}

/* calendars */
.calendars {
    display: flex;
    gap: 2px;
    padding: 27px 0 0 1px;
    font-size: 11px;
}

.calendar {
    width: 198px;
    height: 149px;
    border: 1px solid #000;
    outline: 1px solid #a0a0a0;
    background: linear-gradient(#f0e9dc, #fcc75f 26px, #d0ccc0 26px, #fff 28px, #fdf4c8 28px);
}

.month {
    display: flex;
    align-items: center;
    justify-content: space-between;
    height: 15px;
    padding: 0 3px;
}

.nav {
    display: flex;
    gap: 5px;
    width: 32px;
}

.nav:last-child {
    justify-content: flex-end;
}

.nav button,
.nav svg {
    display: block;
    width: 12px;
    height: 12px;
}

.calendar table {
    width: 189px;
    margin-left: 1px;
    table-layout: fixed;
    border-collapse: collapse;
    text-align: center;
}

.calendar th {
    height: 11px;
    padding: 0 5px 0 0;
    font-weight: normal;
    line-height: 9px;
    vertical-align: top;
}

.calendar thead::after {
    content: '';
    display: block;
    height: 6px;
}

.calendar td {
    height: 19px;
    padding: 0;
    line-height: 17px;
    border: 1px solid transparent;
}

.calendar td:nth-child(n+6) {
    color: #f00;
}

.calendar td.today {
    background: #0078d7;
    border-color: #00f;
    color: #fff;
}

/* collapse bar between panels */
.splitter {
    flex: 0 0 8px;
    display: flex;
    flex-direction: column;
    align-items: center;
    margin: 53px 0 50px;
    padding: 5px 0 3px;
    border: 1px solid #a0a0a0;
}

.splitter svg {
    width: 5px;
    height: 8px;
}

.splitter i {
    flex: 1;
    border-left: 1px dotted #0078d7;
}

/* right panel */
.planner {
    flex: 1;
    min-width: 0;
    display: flex;
    flex-direction: column;
    border-bottom: 1px solid #a0a0a0;
}

.planner-tabs {
    display: flex;
    align-items: flex-end;
    height: 24px;
    padding-left: 5px;
    background: #fff;
    border-bottom: 1px solid #000;
    font-family: 'DejaVu Sans Condensed', 'DejaVu Sans', sans-serif;
    white-space: nowrap;
}

.planner-tabs a {
    height: 15px;
    margin-bottom: 1px;
    padding: 0 3px;
    line-height: 16px;
    border-right: 1px solid #a0a0a0;
}

.planner-tabs a:last-child {
    border: 0;
}

.planner-tabs .active {
    height: 20px;
    margin-bottom: -1px;
    border: 1px solid #000;
    border-bottom: 0;
    background: #f0f0f0;
    line-height: 20px;
}

.search-row {
    display: flex;
    align-items: center;
    height: 29px;
    padding: 1px 25px 0 2px;
    border-bottom: 1px solid #a0a0a0;
    font-family: 'DejaVu Sans Condensed', 'DejaVu Sans', sans-serif;
    font-size: 12px;
}

.search-row label {
    width: 102px;
    white-space: nowrap;
}

.search-row .referral {
    width: 100px;
    margin-left: 26px;
}

.search-row .small {
    flex: 0 0 209px;
}

.actions {
    display: flex;
    height: 45px;
    align-items: flex-start;
    white-space: nowrap;
}

.actions button {
    display: flex;
    align-items: center;
    gap: 5px;
    height: 22px;
    padding: 0 3px;
}

.actions button svg {
    width: 17px;
    height: 17px;
}

.actions button + button {
    padding-left: 5px;
}

.actions hr {
    width: 1px;
    height: 22px;
    margin: 0 4px;
    border: 0;
    background: #a0a0a0;
}

.caret {
    margin-left: -3px;
    border: 3px solid transparent;
    border-top-color: #000;
    border-bottom: 0;
}

.dropdown {
    position: relative;
    margin-right: 2px;
}

.actions .open {
    height: 22px;
    padding: 0 2px;
    gap: 4px;
    border: 1px solid #808080;
    border-bottom: 0;
    box-shadow: 2px 0 3px rgba(0, 0, 0, 0.3);
}

.menu {
    position: absolute;
    z-index: 1;
    left: 0;
    top: 22px;
    width: 436px;
    margin: 0;
    padding: 1px;
    list-style: none;
    border: 1px solid #808080;
    background: linear-gradient(90deg, #f0f0f0 26px, #fff 26px);
    box-shadow: 3px 3px 4px rgba(0, 0, 0, 0.4);
}

.menu a {
    display: flex;
    align-items: center;
    height: 24px;
    padding: 0 26px 0 2px;
    border: 1px solid transparent;
}

.menu a svg,
.menu a i {
    width: 18px;
    height: 18px;
    margin-right: 12px;
}

.menu .hover {
    background: #b3d7f5;
    border-color: #0078d7;
}

.menu kbd {
    margin-left: auto;
    font: inherit;
}

.menu .separator {
    height: 3px;
    margin: 2px 0 0 33px;
    border-top: 1px solid #a0a0a0;
}

.cursor {
    position: absolute;
    z-index: 2;
    left: 269px;
    top: 479px;
    width: 12px;
    height: 19px;
}

/* schedule grid */
.schedule {
    display: flex;
    border-bottom: 1px solid #7c9fc8;
}

.slots {
    flex: 1;
    border-right: 1px solid #a0a0a0;
}

.slots-head {
    height: 31px;
    background: linear-gradient(#dcebfb, #bfdafc);
    border-bottom: 1px solid #a0a0a0;
}

.slot {
    height: 24px;
    background: #dbeafb;
    border-bottom: 1px solid #b8c2cc;
}

.slot:last-child {
    border-bottom: 0;
}

.slot.selected {
    background: #1883d7;
}

.scroll {
    flex: 0 0 16px;
    display: flex;
    flex-direction: column;
    align-items: center;
    gap: 4px;
    padding-bottom: 4px;
}

.scroll svg {
    width: 8px;
    height: 8px;
}

.expand {
    display: flex;
    align-items: center;
    justify-content: center;
    align-self: stretch;
    height: 31px;
    margin: 0 0 2px 1px;
    border-left: 1px solid #a0a0a0;
}

.thumb {
    align-self: stretch;
    height: 17px;
    margin: 0 0 auto 2px;
    background: #cdcdcd;
}

.status {
    height: 21px;
    padding-right: 16px;
    background: linear-gradient(#f6f6f0, #c4c4ae);
    border-bottom: 1px solid #a0a0a0;
    font-family: 'DejaVu Sans Condensed', 'DejaVu Sans', sans-serif;
}

.status p {
    display: flex;
    gap: 9px;
    height: 20px;
    padding-left: 437px;
    line-height: 20px;
    border-right: 1px solid #a0a0a0;
}

.h-splitter {
    height: 8px;
}

.h-splitter div {
    display: flex;
    align-items: center;
    gap: 3px;
    height: 8px;
    margin-right: 84px;
    padding: 0 4px;
    border: solid #a0a0a0;
    border-width: 0 1px 1px 0;
}

.h-splitter i {
    flex: 1;
    border-top: 1px dotted #0078d7;
}

.h-splitter svg {
    width: 8px;
    height: 6px;
}

.blank {
    height: 22px;
    background: #fff;
    border-bottom: 1px solid #000;
}

.extra {
    flex: 1;
    display: flex;
    flex-direction: column;
    margin-top: 3px;
    background: #fdf9cf;
    border-top: 1px solid #000;
    font-family: 'DejaVu Sans Condensed', 'DejaVu Sans', sans-serif;
}

.extra tr {
    display: flex;
}

.extra thead {
    height: 19px;
    background: #f0f0f0;
    border-bottom: 1px solid #000;
}

.extra th {
    height: 18px;
    padding: 0;
    font-weight: normal;
    line-height: 18px;
    border-right: 1px solid #000;
}

.extra .info {
    flex: 1;
    padding-right: 165px;
    text-align: right;
}

.extra .birth {
    width: 114px;
}

.extra .author {
    width: 76px;
    border: 0;
}

.extra tbody,
.extra tbody tr {
    flex: 1;
    display: flex;
}

.extra td {
    flex: 1;
    align-self: center;
    color: #6f6f6f;
    text-align: center;
}

/* open documents */
footer {
    display: flex;
    align-items: flex-end;
    gap: 6px;
    height: 29px;
    padding-right: 2px;
    background: #fff;
    color: #333;
    font-family: 'DejaVu Sans Condensed', 'DejaVu Sans', sans-serif;
}

.doc-tab {
    display: flex;
    height: 23px;
}

.slant {
    width: 10px;
    height: 23px;
}

.doc-body {
    display: flex;
    align-items: center;
    gap: 4px;
    padding-right: 3px;
    border: 1px solid #a0a0a0;
    border-width: 1px 1px 0 0;
    white-space: nowrap;
}

.doc-body > svg {
    width: 15px;
    height: 15px;
}

.doc-body button,
.more {
    display: flex;
    align-items: center;
    justify-content: center;
    width: 20px;
    height: 19px;
    border: 1px solid #c4c4c4;
    border-radius: 3px;
}

.doc-body button svg,
.more svg {
    width: 12px;
    height: 12px;
}

.current .doc-body {
    width: 462px;
}

.current span {
    margin-left: auto;
}

.more {
    margin: 0 1px 1px auto;
}
```
